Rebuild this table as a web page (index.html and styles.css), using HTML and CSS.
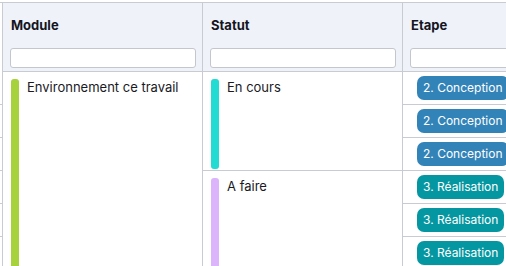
FILE: index.html
```html
<!DOCTYPE html>
<html lang="fr">
<head>
<meta charset="utf-8">
<title>Modules</title>
<link rel="stylesheet" href="styles.css">
</head>
<body>
<div class="viewport">
  <div class="grid">
    <div class="stub stub-head"></div>
    <div class="head head-first">
      <div class="label">Module</div>
      <input class="filter" type="text">
    </div>
    <div class="head head-mid">
      <div class="label">Statut</div>
      <input class="filter" type="text">
    </div>
    <div class="head head-last">
      <div class="label">Etape</div>
      <input class="filter" type="text">
    </div>

    <div class="stub r2"></div>
    <div class="stub r3"></div>
    <div class="stub r4"></div>
    <div class="stub r5"></div>
    <div class="stub r6"></div>
    <div class="stub r7"></div>

    <div class="cell module">
      <span class="bar bar-green"></span>
      <span class="text">Environnement ce travail</span>
    </div>
    <div class="cell statut statut-a">
      <span class="bar bar-teal"></span>
      <span class="text">En cours</span>
    </div>
    <div class="cell statut statut-b">
      <span class="bar bar-lavender"></span>
      <span class="text">A faire</span>
    </div>

    <div class="etape r2"><span class="badge badge-blue">2. Conception</span></div>
    <div class="etape r3"><span class="badge badge-blue">2. Conception</span></div>
    <div class="etape r4"><span class="badge badge-blue">2. Conception</span></div>
    <div class="etape r5"><span class="badge badge-teal">3. Réalisation</span></div>
    <div class="etape r6"><span class="badge badge-teal">3. Réalisation</span></div>
    <div class="etape r7"><span class="badge badge-teal">3. Réalisation</span></div>
  </div>
</div>
</body>
</html>
```

FILE: styles.css
```css
html, body {
  margin: 0;
  padding: 0;
  background: #ffffff;
}

body {
  font-family: Inter, "Noto Sans", "DejaVu Sans", sans-serif;
  font-size: 13px;
  color: #1c1c22;
}

.viewport {
  width: 506px;
  height: 266px;
  overflow: hidden;
  padding-top: 2px;
  box-sizing: border-box;
}

.grid {
  display: grid;
  grid-template-columns: 2px 201px 200px 200px;
  grid-template-rows: 69px repeat(6, 33px);
  border-top: 1px solid #c8cbd2;
  width: 603px;
}

.stub {
  grid-column: 1;
  box-sizing: border-box;
}

.stub-head { grid-row: 1; }

.stub.r2, .stub.r3, .stub.r4, .stub.r5, .stub.r6, .stub.r7 {
  border-bottom: 1px solid #c8cbd2;
}

.r2 { grid-row: 2; }
.r3 { grid-row: 3; }
.r4 { grid-row: 4; }
.r5 { grid-row: 5; }
.r6 { grid-row: 6; }
.r7 { grid-row: 7; }

.head {
  grid-row: 1;
  box-sizing: border-box;
  background: #eff3f9;
  border-bottom: 1px solid #c8cbd2;
  border-right: 1px solid #c8cbd2;
  padding: 14px 6px 0 7px;
  display: flex;
  flex-direction: column;
}

.head-first {
  grid-column: 2;
  border-left: 1px solid #c8cbd2;
}

.head-mid { grid-column: 3; }

.head-last {
  grid-column: 4;
  border-right: none;
}

.label {
  font-weight: 700;
  line-height: 16px;
  color: #15151f;
  padding-left: 1px;
}

.filter {
  margin: 15px 0 0 0;
  height: 20px;
  width: 100%;
  box-sizing: border-box;
  border: 1px solid #c3c6cd;
  border-radius: 3px;
  background: #ffffff;
  padding: 0 4px;
  font: inherit;
}

.cell {
  box-sizing: border-box;
  display: flex;
  align-items: stretch;
  gap: 8px;
  padding: 7px 6px 1px 8px;
}

.module {
  grid-column: 2;
  grid-row: 2 / span 6;
  border-left: 1px solid #c8cbd2;
  border-right: 1px solid #c8cbd2;
  padding-bottom: 0;
}

.statut {
  grid-column: 3;
  border-right: 1px solid #c8cbd2;
  border-bottom: 1px solid #c8cbd2;
}

.statut-a { grid-row: 2 / span 3; }
.statut-b { grid-row: 5 / span 3; }

.bar {
  flex: 0 0 8px;
  width: 8px;
  border-radius: 3px;
}

.module .bar { border-radius: 3px 3px 0 0; }

.bar-green { background: #a7d23c; }
.bar-teal { background: #22dbd2; }
.bar-lavender { background: #dcb4fc; }

.text {
  align-self: flex-start;
  line-height: 17px;
  color: #1a1a1f;
}

.etape {
  grid-column: 4;
  box-sizing: border-box;
  border-bottom: 1px solid #c8cbd2;
  display: flex;
  align-items: center;
  padding-left: 14px;
}

.badge {
  display: inline-flex;
  align-items: center;
  height: 24px;
  padding: 0 6px;
  border-radius: 7px;
  color: #ffffff;
  font-size: 12px;
  line-height: 16px;
  white-space: nowrap;
}

.badge-blue { background: #3283b8; }
.badge-teal { background: #0597a1; }
```
